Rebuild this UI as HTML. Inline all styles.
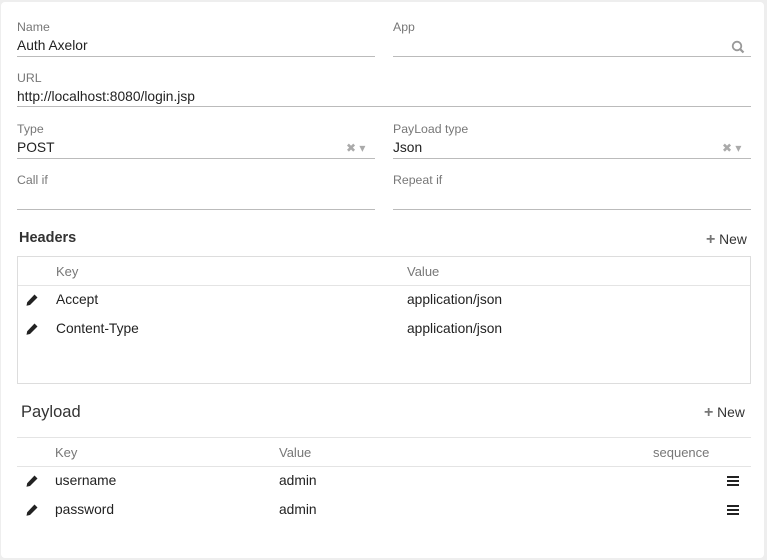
<!DOCTYPE html>
<html><head><meta charset="utf-8"><style>
*{margin:0;padding:0;box-sizing:border-box}
body{width:767px;height:560px;background:#eee;font-family:"Liberation Sans",sans-serif;font-size:13.8px;color:#222;position:relative;overflow:hidden}
.panel{position:absolute;left:1px;top:2px;width:763px;height:556px;background:#fff;border-radius:4px}
.a{position:absolute;white-space:nowrap}
.lbl{color:#777;font-size:12.3px}
.line{position:absolute;height:1px;background:#bbb}
.hl{position:absolute;height:1px;background:#e4e4e4}
.th{color:#777;font-size:13px}
.ico{position:absolute;color:#aaa;font-size:12px}
</style></head><body>
<div class="panel"></div>
<svg width="0" height="0" style="position:absolute"><defs>
<symbol id="pen" viewBox="0 0 14 14"><path d="M9.5 1.5 L12.5 4.5 L5 12 L1.5 12.8 L2.2 9.2 Z" fill="#222"/></symbol>
<symbol id="bars" viewBox="0 0 14 12"><rect x="1" y="1" width="12" height="2" fill="#222"/><rect x="1" y="5" width="12" height="2" fill="#222"/><rect x="1" y="9" width="12" height="2" fill="#222"/></symbol>
</defs></svg>
<div class="a lbl" style="left:17px;top:20px">Name</div>
<div class="a" style="left:17px;top:38px">Auth Axelor</div>
<div class="line" style="left:17px;top:56px;width:358px"></div>
<div class="a lbl" style="left:393px;top:20px">App</div>
<svg class="a" style="left:731px;top:40px" width="14" height="14" viewBox="0 0 14 14"><circle cx="6" cy="6" r="4.3" fill="none" stroke="#999" stroke-width="1.8"/><line x1="9" y1="9" x2="12.5" y2="12.5" stroke="#999" stroke-width="2.2"/></svg>
<div class="line" style="left:393px;top:56px;width:358px"></div>
<div class="a lbl" style="left:17px;top:71px">URL</div>
<div class="a" style="left:17px;top:89px">http://localhost:8080/login.jsp</div>
<div class="line" style="left:17px;top:106px;width:734px"></div>
<div class="a lbl" style="left:17px;top:122px">Type</div>
<div class="a" style="left:17px;top:140px">POST</div>
<div class="ico" style="left:346px;top:141px">✖ ▾</div>
<div class="line" style="left:17px;top:158px;width:358px"></div>
<div class="a lbl" style="left:393px;top:122px">PayLoad type</div>
<div class="a" style="left:393px;top:140px">Json</div>
<div class="ico" style="left:722px;top:141px">✖ ▾</div>
<div class="line" style="left:393px;top:158px;width:358px"></div>
<div class="a lbl" style="left:17px;top:173px">Call if</div>
<div class="line" style="left:17px;top:209px;width:358px"></div>
<div class="a lbl" style="left:393px;top:173px">Repeat if</div>
<div class="line" style="left:393px;top:209px;width:358px"></div>

<div class="a" style="left:19px;top:230px;font-size:14.5px;font-weight:bold;color:#333">Headers</div>
<div class="a" style="left:706px;top:231px;color:#333"><b style="color:#777;font-size:16px">+</b> New</div>
<div class="a" style="left:17px;top:256px;width:734px;height:128px;border:1px solid #ddd"></div>
<div class="a th" style="left:56px;top:264px">Key</div>
<div class="a th" style="left:407px;top:264px">Value</div>
<div class="hl" style="left:18px;top:285px;width:732px"></div>
<svg class="a" style="left:25px;top:293px" width="14" height="14"><use href="#pen"/></svg><div class="a" style="left:56px;top:292px">Accept</div><div class="a" style="left:407px;top:292px">application/json</div>
<svg class="a" style="left:25px;top:322px" width="14" height="14"><use href="#pen"/></svg><div class="a" style="left:56px;top:321px">Content-Type</div><div class="a" style="left:407px;top:321px">application/json</div>

<div class="a" style="left:21px;top:403px;font-size:16.5px;color:#333">Payload</div>
<div class="a" style="left:704px;top:404px;color:#333"><b style="color:#777;font-size:16px">+</b> New</div>
<div class="hl" style="left:17px;top:437px;width:734px"></div>
<div class="a th" style="left:55px;top:445px">Key</div>
<div class="a th" style="left:279px;top:445px">Value</div>
<div class="a th" style="left:653px;top:445px">sequence</div>
<div class="hl" style="left:17px;top:466px;width:734px"></div>
<svg class="a" style="left:25px;top:474px" width="14" height="14"><use href="#pen"/></svg><div class="a" style="left:55px;top:473px">username</div><div class="a" style="left:279px;top:473px">admin</div><svg class="a" style="left:726px;top:475px" width="14" height="12"><use href="#bars"/></svg>
<svg class="a" style="left:25px;top:503px" width="14" height="14"><use href="#pen"/></svg><div class="a" style="left:55px;top:502px">password</div><div class="a" style="left:279px;top:502px">admin</div><svg class="a" style="left:726px;top:504px" width="14" height="12"><use href="#bars"/></svg>
</body></html>
